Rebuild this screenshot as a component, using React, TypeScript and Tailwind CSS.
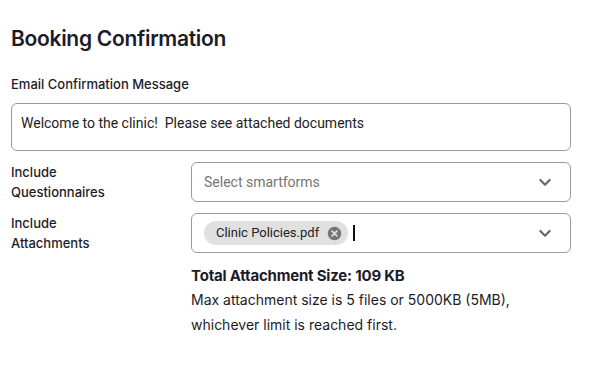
import React from 'react';

const Chevron = () => (
  <svg className="w-[16px] h-[16px] text-[#666]" viewBox="0 0 24 24" fill="none" stroke="currentColor" strokeWidth="3.2" strokeLinecap="round" strokeLinejoin="round">
    <path d="M5 9l7 7 7-7" />
  </svg>
);

const App: React.FC = () => {
  return (
    <div className="w-[616px] h-[368px] bg-white pl-[11px] pr-[45px] pt-[25px] font-['Inter',sans-serif] text-[#1c1c28]">
      <h1 className="text-[21px] leading-[28px] font-semibold tracking-[-0.3px]">Booking Confirmation</h1>

      <label className="block mt-[22px] text-[13px] leading-[18px] font-medium">Email Confirmation Message</label>
      <div className="mt-[10px] h-[48px] border border-[#9a9a9a] rounded-[6px] px-[9px] pt-[9px] font-['Roboto',sans-serif] text-[14px] leading-[20px] text-[#222]">
        Welcome to the clinic!&nbsp; Please see attached documents
      </div>

      <div className="mt-[11px] flex items-start">
        <div className="w-[180px] text-[13px] leading-[20px] font-medium">
          Include
          <br />
          Questionnaires
        </div>
        <div className="flex-1 h-[40px] border border-[#9a9a9a] rounded-[6px] flex items-center pl-[12px] pr-[17px] font-['Roboto',sans-serif] text-[14px] text-[#757575]">
          <span className="flex-1">Select smartforms</span>
          <Chevron />
        </div>
      </div>

      <div className="mt-[11px] flex items-start">
        <div className="w-[180px] text-[13px] leading-[20px] font-medium">
          Include
          <br />
          Attachments
        </div>
        <div className="flex-1 h-[40px] border border-[#9a9a9a] rounded-[6px] flex items-center pl-[12px] pr-[17px] font-['Roboto',sans-serif] text-[13px] text-[#222]">
          <div className="flex-1 flex items-center">
            <span className="h-[24px] rounded-full bg-[#e0e0e0] flex items-center pl-[12px] pr-[6px] gap-[8px]">
              Clinic Policies.pdf
              <svg className="w-[15px] h-[15px]" viewBox="0 0 16 16">
                <circle cx="8" cy="8" r="7.2" fill="#757575" />
                <path d="M5.5 5.5l5 5M10.5 5.5l-5 5" stroke="#e0e0e0" strokeWidth="1.8" strokeLinecap="round" />
              </svg>
            </span>
            <span className="ml-[5px] w-[1.5px] h-[16px] bg-[#111]" />
          </div>
          <Chevron />
        </div>
      </div>

      <div className="ml-[180px] mt-[12px]">
        <p className="text-[15px] leading-[22px] font-bold tracking-[-0.2px]">Total Attachment Size: 109 KB</p>
        <p className="text-[14px] leading-[25px]">
          Max attachment size is 5 files or 5000KB (5MB),
          <br />
          whichever limit is reached first.
        </p>
      </div>
    </div>
  );
};

export default App;
